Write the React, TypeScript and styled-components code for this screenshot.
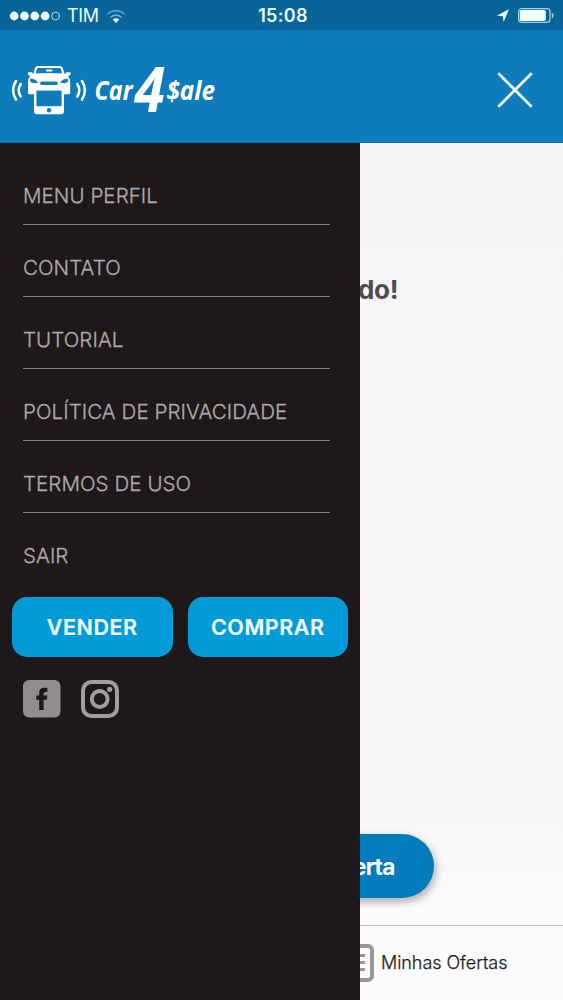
import React from 'react';
import styled, { createGlobalStyle } from 'styled-components';

const GlobalStyle = createGlobalStyle`
  * { box-sizing: border-box; }
  body { margin: 0; font-family: Inter, 'Liberation Sans', sans-serif; }
`;

const Screen = styled.div`
  width: 563px;
  height: 1000px;
  display: flex;
  flex-direction: column;
  overflow: hidden;
  background: #f7f7f9;
`;

const StatusBar = styled.div`
  height: 30px;
  flex: none;
  display: grid;
  grid-template-columns: 1fr auto 1fr;
  align-items: center;
  padding: 2px 6px 0 9px;
  background: #086598;
  color: #e9fbff;
`;

const StatusGroup = styled.div<{ $end?: boolean }>`
  display: flex;
  align-items: center;
  justify-content: ${(p) => (p.$end ? 'flex-end' : 'flex-start')};
`;

const Label = styled.span<{
  $size: number;
  $weight?: number;
  $spacing?: number;
  $color?: string;
  $stroke?: number;
}>`
  font-size: ${(p) => p.$size}px;
  line-height: 1.2;
  font-weight: ${(p) => p.$weight ?? 400};
  letter-spacing: ${(p) => p.$spacing ?? 0}px;
  color: ${(p) => p.$color ?? 'inherit'};
  -webkit-text-stroke: ${(p) => p.$stroke ?? 0}px currentColor;
  white-space: nowrap;
`;

const Carrier = styled(Label)`
  margin: 0 7px 0 6px;
`;

const Header = styled.header`
  height: 112.5px;
  flex: none;
  display: flex;
  align-items: center;
  justify-content: space-between;
  padding: 0 30px 0 12px;
  background: #0e7cbc;
  border-bottom: 1px solid #0a70ad;
`;

const Brand = styled.div`
  display: flex;
  align-items: center;
  padding-top: 8.5px;
`;

const Wordmark = styled.svg`
  margin-left: 6px;
  overflow: visible;
  font-family: 'Open Sans', 'Noto Sans', sans-serif;
  font-weight: 700;
  font-style: italic;
  fill: #fff;
`;

const CloseButton = styled.button`
  display: flex;
  padding: 9px 0 0;
  border: 0;
  background: none;
`;

const Main = styled.div`
  flex: 1;
  min-height: 0;
  display: flex;
`;

const Drawer = styled.nav`
  width: 360px;
  flex: none;
  padding-top: 10px;
  background: #1e181a;
`;

const MenuItem = styled.div<{ $last?: boolean }>`
  height: 72px;
  margin: 0 30px 0 23px;
  padding-top: 16px;
  display: flex;
  align-items: center;
  border-bottom: 1px solid ${(p) => (p.$last ? 'transparent' : '#858183')};
  color: #aeaaac;
`;

const Actions = styled.div`
  display: flex;
  gap: 15px;
  padding: 12px 12px 0;
`;

const ActionButton = styled.button`
  flex: 1;
  height: 60px;
  padding: 2px 0 0;
  border: 0;
  border-radius: 15px;
  background: #039ad8;
  color: #effdff;
  font-family: inherit;
`;

const Social = styled.div`
  display: flex;
  gap: 20px;
  padding: 23.5px 23px 0;
`;

const Content = styled.main`
  flex: 1;
  min-width: 0;
  display: flex;
  flex-direction: column;
  overflow: hidden;
  background: linear-gradient(#f5f5f8 0%, #f7f7f9 78%, #fcfbfe 90%);
`;

const Message = styled.div`
  flex: 1;
  padding-top: 131px;
  margin-left: -2px;
`;

const OfferButton = styled.button`
  width: 86px;
  height: 64px;
  flex: none;
  display: flex;
  align-items: center;
  margin: 0 0 27px -12px;
  padding: 1px 0 0 5px;
  border: 0;
  border-radius: 0 32px 32px 0;
  background: #047bbb;
  box-shadow: 2px 4px 9px rgba(0, 0, 0, 0.3);
  color: #fff;
  font-family: inherit;
`;

const TabBar = styled.div`
  height: 75px;
  flex: none;
  display: flex;
  align-items: center;
  gap: 7px;
  border-top: 1px solid #b9b8bb;
  background: #fcfbfe;
`;

const ListIcon = styled.svg`
  margin-left: -18px;
`;

const menu = ['MENU PERFIL', 'CONTATO', 'TUTORIAL', 'POLÍTICA DE PRIVACIDADE', 'TERMOS DE USO', 'SAIR'];

const Signal = () => (
  <svg width="52" height="10" viewBox="0 0 52 10" fill="#f0fdff">
    {[5.2, 15.5, 25.8, 36.1].map((x) => (
      <circle key={x} cx={x} cy="5" r="4.4" />
    ))}
    <circle cx="46.6" cy="5" r="3.9" fill="none" stroke="#b8e2f4" strokeWidth="1" />
  </svg>
);

const Wifi = () => (
  <svg width="20" height="15" viewBox="0 0 20 15" fill="none">
    <path d="M1.5 5.2C6 .6 14 .6 18.500 5.200" stroke="#4d9cc4" strokeWidth="1.900" />
    <path d="M4.500 8.400c3-3 8-3 11 0" stroke="#68b0d3" strokeWidth="1.900" />
    <path d="M6.800 10.600c1.900-1.700 4.500-1.700 6.400 0L10 14z" fill="#f0fdff" />
  </svg>
);

const StatusRight = () => (
  <svg width="60" height="18" viewBox="0 0 60 18">
    <path d="M12 2.200 6.600 15 5.800 9.300 0 8.400z" fill="#eefcff" />
    <rect x="21.600" y="1.700" width="31.400" height="13.600" rx="3" fill="none" stroke="#9fd1eb" strokeWidth="1.200" />
    <rect x="22.800" y="3" width="26" height="11" rx="1.500" fill="#f3feff" />
    <path d="M54.800 5.600c2.400.8 2.400 5 0 5.800z" fill="#9fd1eb" />
  </svg>
);

const CarPhone = () => (
  <svg width="76" height="52" viewBox="0 0 76 52" fill="#fff">
    <path d="M26 2h21.500q2.800 0 3.500 2.500l1.500 5.500 2.200-1.800h3.800v2.600l-2.500 1.400q2.200 2.200 2.200 5.800v11q0 1.300-1.300 1.300H17.300q-1.300 0-1.300-1.300v-11q0-3.600 2.200-5.800l-2.200-1.400V8.200h3.600l1.800 1.800 1.300-5.500Q23.400 2 26 2z" />
    <path d="M26.300 4h21.200q1.200 0 1.500 1.200l1 4.300q-13-1.200-26.200 0l1-4.300Q25.100 4 26.300 4z" fill="#0e7cbc" />
    <rect x="34" y="5.400" width="6.500" height="2" rx="1" />
    <path d="M18.600 15q4.600 0 7 3.300-4.500 1.500-7-.8zM55.700 15q-4.600 0-7 3.300 4.500 1.500 7-.8z" fill="#0e7cbc" stroke="#0e7cbc" strokeWidth=".8" strokeLinejoin="round" />
    <rect x="28.200" y="17.500" width="17.500" height="3.400" rx="1.500" fill="#0e7cbc" />
    <path d="M22 26h30v21q0 3.300-3.300 3.300H25.300Q22 50.300 22 47z" />
    <rect x="24.400" y="26.600" width="25.200" height="15.600" fill="#0e7cbc" />
    <circle cx="37" cy="46.200" r="2.200" fill="#0e7cbc" />
    <path
      d="M4 17q-5.800 9.200 0 18.500M8.700 20q-4 6.300 0 12.500M70 17q5.800 9.200 0 18.500M65.300 20q4 6.300 0 12.500"
      fill="none"
      stroke="#fff"
      strokeWidth="2.500"
      strokeLinecap="round"
    />
  </svg>
);

const Facebook = () => (
  <svg width="38" height="38" viewBox="0 0 38 38">
    <rect width="37.500" height="37.500" rx="6" fill="#918d8f" />
    <path d="M16.200 30V19.800h-3v-4.300h3v-2.300c0-3.700 2-5.400 5.400-5.400h2.800V12h-1.800c-1.500 0-2 .7-2 1.900v1.600h3.800l-.6 4.300h-3.200V30z" fill="#1e181a" />
  </svg>
);

const Instagram = () => (
  <svg width="38" height="38" viewBox="0 0 38 38" fill="none" stroke="#a29ea0">
    <rect x="2" y="2" width="34" height="34" rx="8.500" strokeWidth="4" />
    <circle cx="18.700" cy="19" r="7.900" strokeWidth="4" />
    <circle cx="28.700" cy="9.300" r="2.600" fill="#a29ea0" stroke="none" />
  </svg>
);

export default function App() {
  return (
    <>
      <GlobalStyle />
      <Screen>
        <StatusBar>
          <StatusGroup>
            <Signal />
            <Carrier $size={18} $spacing={-0.3}>TIM</Carrier>
            <Wifi />
          </StatusGroup>
          <Label $size={18} $weight={600} $spacing={0.3}>15:08</Label>
          <StatusGroup $end>
            <StatusRight />
          </StatusGroup>
        </StatusBar>
        <Header>
          <Brand>
            <CarPhone />
            <Wordmark width="124" height="52" viewBox="0 0 124 52">
              <text x="0.500" y="36.200" fontSize="27" textLength="38" lengthAdjust="spacingAndGlyphs">Car</text>
              <text x="40.500" y="48.300" fontSize="62" textLength="30.500" lengthAdjust="spacingAndGlyphs">4</text>
              <text x="72.500" y="36.200" fontSize="27" textLength="48.500" lengthAdjust="spacingAndGlyphs">$ale</text>
            </Wordmark>
          </Brand>
          <CloseButton aria-label="Fechar">
            <svg width="36" height="36" viewBox="0 0 36 36" stroke="#effcff" strokeWidth="2.700">
              <path d="M1.300 1.300l33.400 33.400M34.700 1.300L1.300 34.700" />
            </svg>
          </CloseButton>
        </Header>
        <Main>
          <Drawer>
            {menu.map((item, i) => (
              <MenuItem key={item} $last={i === menu.length - 1}>
                <Label $size={20.5} $weight={300} $spacing={0.07} $stroke={0.3}>{item}</Label>
              </MenuItem>
            ))}
            <Actions>
              <ActionButton><Label $size={21.5} $weight={600} $spacing={0.55} $stroke={0.2}>VENDER</Label></ActionButton>
              <ActionButton><Label $size={21.5} $weight={600} $spacing={0.55} $stroke={0.2}>COMPRAR</Label></ActionButton>
            </Actions>
            <Social>
              <Facebook />
              <Instagram />
            </Social>
          </Drawer>
          <Content>
            <Message>
              <Label $size={26} $weight={700} $spacing={-0.3} $color="#4d4c4e">do!</Label>
            </Message>
            <OfferButton><Label $size={22.5} $weight={700} $spacing={-0.7}>erta</Label></OfferButton>
            <TabBar>
              <ListIcon width="32" height="38" viewBox="0 0 32 38" fill="none" stroke="#98979a">
                <rect x="2" y="2" width="28" height="34" rx="4" strokeWidth="4" />
                <path d="M8 11.500h15M8 18.500h15M8 25.500h15" strokeWidth="3.200" />
              </ListIcon>
              <Label $size={18} $weight={300} $spacing={-0.05} $stroke={0.25} $color="#1f1d20">Minhas Ofertas</Label>
            </TabBar>
          </Content>
        </Main>
      </Screen>
    </>
  );
}
